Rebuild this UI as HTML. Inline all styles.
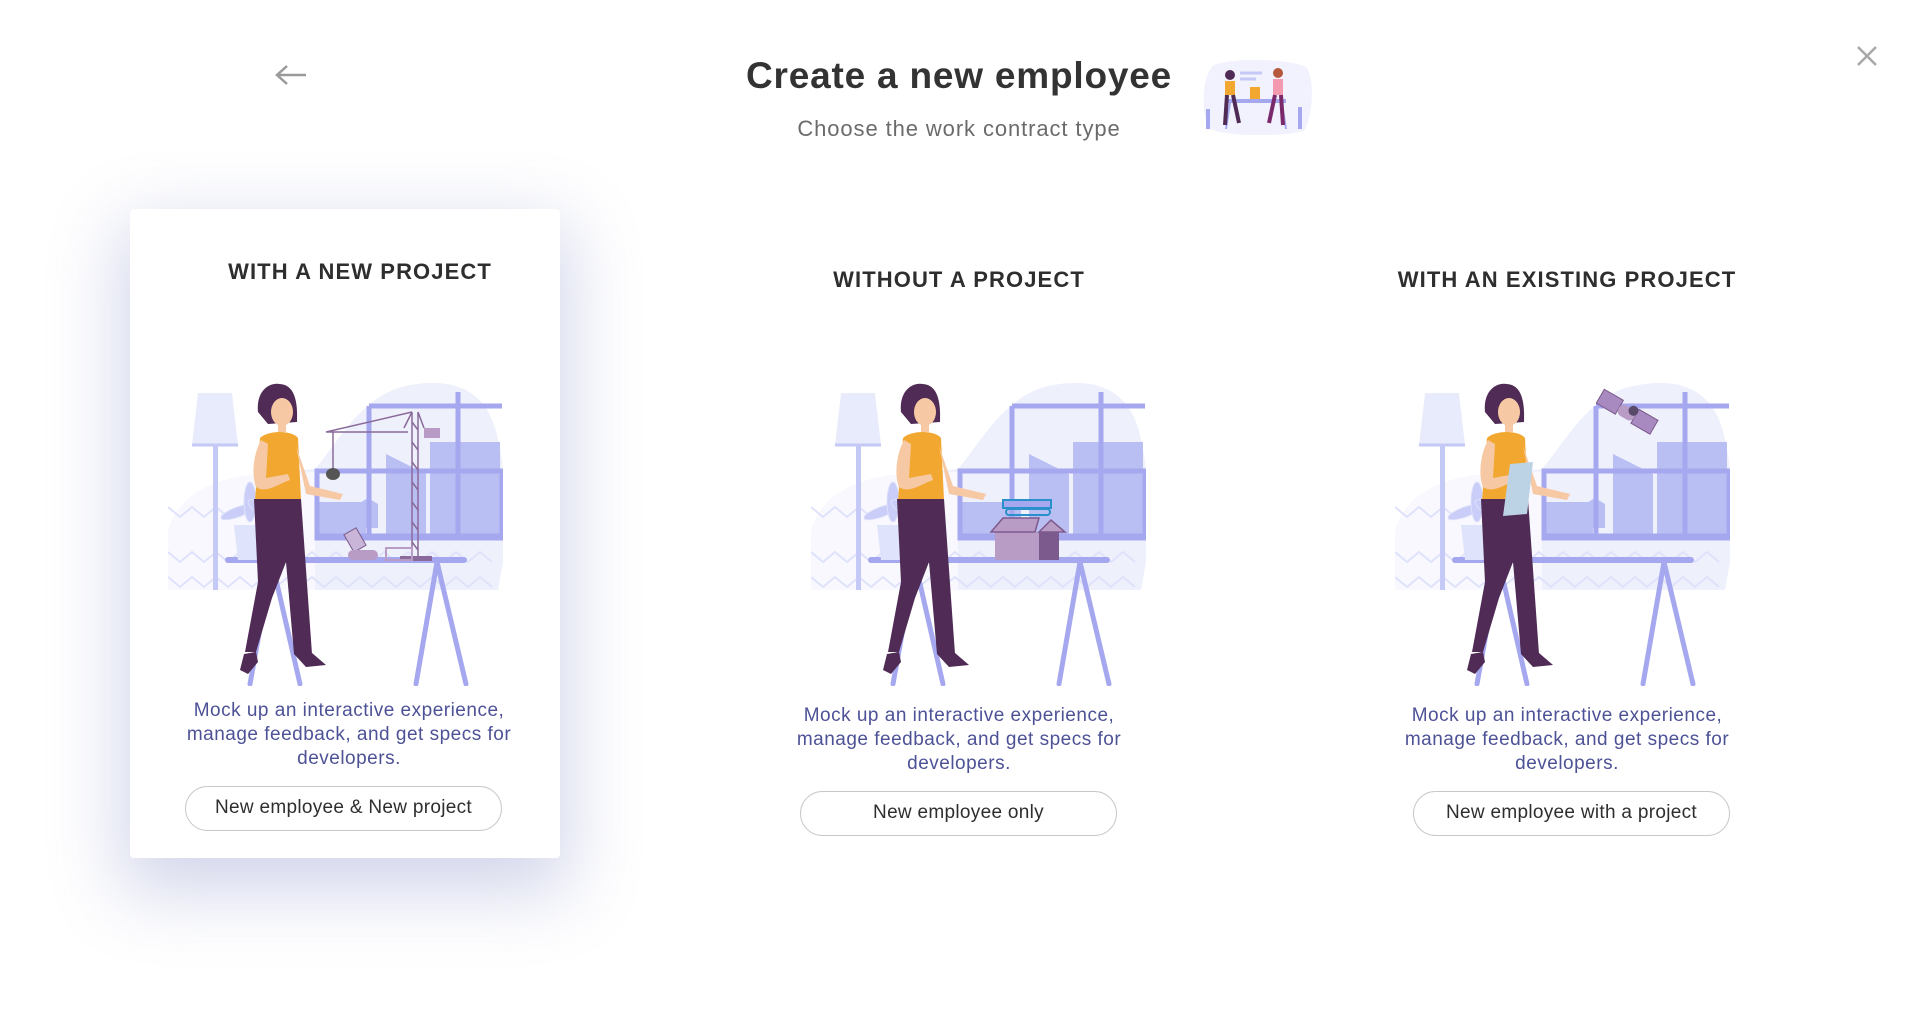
<!DOCTYPE html>
<html><head><meta charset="utf-8"><style>
html,body{margin:0;padding:0;background:#fff;width:1920px;height:1024px;overflow:hidden;font-family:"Liberation Sans",sans-serif;}
.abs{position:absolute}
h1{position:absolute;left:0;width:1918px;top:55px;margin:0;text-align:center;font-size:37px;font-weight:bold;color:#333;letter-spacing:0.8px}
.sub{position:absolute;left:0;width:1918px;top:116px;text-align:center;font-size:22px;color:#6b6b6b;letter-spacing:0.9px}
.card{position:absolute;left:130px;top:209px;width:430px;height:649px;background:#fff;border-radius:4px;box-shadow:0 25px 70px 10px rgba(110,120,190,.30)}
.head{position:absolute;font-size:22px;font-weight:bold;color:#2e2e2e;text-align:center;width:500px;letter-spacing:1.1px}
.desc{position:absolute;width:330px;text-align:center;font-size:19px;line-height:24px;color:#4d5296;letter-spacing:0.5px}
.btn{position:absolute;width:317px;height:45px;border:1.5px solid #c8c8cc;border-radius:24px;box-sizing:border-box;text-align:center;line-height:42px;font-size:19px;color:#2e2e2e;letter-spacing:0.3px}
svg.ill{position:absolute;width:335px;height:304px}
</style></head><body>
<svg class="abs" style="left:274px;top:64px" width="34" height="22" viewBox="0 0 34 22"><path d="M32 11H4M13 2L3 11l10 9" fill="none" stroke="#9a9a9a" stroke-width="2.5"/></svg>
<svg class="abs" style="left:1856px;top:45px" width="22" height="22" viewBox="0 0 22 22"><path d="M2 2L20 20M20 2L2 20" stroke="#a8a8a8" stroke-width="2.5"/></svg>
<h1>Create a new employee</h1>
<div class="sub">Choose the work contract type</div>
<svg class="abs" style="left:1200px;top:59px" width="114" height="76" viewBox="0 0 114 76">
<path d="M14 6C35 -2 90 0 106 8C116 20 112 60 104 72C80 78 30 78 10 70C0 55 2 15 14 6Z" fill="#f1f2fd"/>
<rect x="26" y="40" width="60" height="4" fill="#a5a8ef"/>
<path d="M30 44l-4 26M82 44l4 26" stroke="#a5a8ef" stroke-width="2"/>
<circle cx="30" cy="16" r="5" fill="#4f2b55"/><rect x="25" y="22" width="10" height="14" fill="#f2a830"/><path d="M27 36l-2 30M33 36l6 28" stroke="#4f2b55" stroke-width="4"/>
<circle cx="78" cy="14" r="5" fill="#b5583c"/><rect x="73" y="20" width="10" height="16" fill="#f39ab0"/><path d="M75 36l-6 28M81 36l2 30" stroke="#7a2a6a" stroke-width="4"/>
<rect x="50" y="28" width="10" height="12" fill="#f2a830"/>
<path d="M40 14h22M40 20h16" stroke="#c5c9f5" stroke-width="3"/>
<path d="M8 70V50M100 70V48" stroke="#a5a8ef" stroke-width="4"/>
</svg>

<div class="card"></div>

<!-- column 1 -->
<div class="head" style="left:110px;top:259px">WITH A NEW PROJECT</div>
<svg class="ill" style="left:168px;top:382px" viewBox="0 0 335 304">
<g id="base">
<path d="M0 208L0 150C10 110 50 96 90 92L147 87C170 60 190 20 230 6C270 -5 310 0 325 40C340 80 336 140 335 180L330 208Z" fill="#eef0fc"/>
<path d="M0 150C10 110 50 96 90 92L147 90V208H0Z" fill="#f8f8fe"/>
<path d="M0 170l12 10 12-10 12 10 12-10 12 10 12-10 12 10 12-10 12 10 12-10 12 10 12-10 12 10 12-10 12 10 12-10 12 10 12-10 12 10 12-10 12 10 12-10 12 10 12-10 12 10 12-10 12 10 M0 195l12 10 12-10 12 10 12-10 12 10 12-10 12 10 12-10 12 10 12-10 12 10 12-10 12 10 12-10 12 10 12-10 12 10 12-10 12 10 12-10 12 10 12-10 12 10 12-10 12 10 12-10 12 10 M0 125l12 10 12-10 12 10 12-10 12 10 12-10 12 10 12-10 12 10 12-10 12 10" fill="none" stroke="#dfe2fb" stroke-width="2"/>
<path d="M150 130h40v-8l10 -6 10 6v24h-60Z" fill="#b9bff3"/>
<rect x="150" y="120" width="48" height="34" fill="#b9bff3"/>
<path d="M218 72l40 20v62h-40Z" fill="#b9bff3"/>
<rect x="262" y="60" width="70" height="94" fill="#b9bff3"/>
<rect x="149" y="89" width="185" height="67" fill="none" stroke="#a5a8ef" stroke-width="5"/>
<path d="M201 24V156M290 10V156M201 24H334M149 154H334" stroke="#a5a8ef" stroke-width="5"/>
<path d="M30 11H64L70 63H24Z" fill="#e8ebfc"/><path d="M24 63H70" stroke="#c5c9f5" stroke-width="3"/>
<rect x="45" y="63" width="5" height="145" fill="#c5c9f5"/>
<path d="M60 178H296" stroke="#a5a8ef" stroke-width="6" stroke-linecap="round"/>
<path d="M104 180L82 302M104 180L132 302M269 180L248 302M269 180L298 302" stroke="#a5a8ef" stroke-width="5" stroke-linecap="round"/>
<path d="M66 143h34l-4 35h-26Z" fill="#dfe3fb"/>
<g fill="#c9cdf7" stroke="#dfe2fb" stroke-width="1"><ellipse cx="70" cy="130" rx="18" ry="5" transform="rotate(-20 70 130)"/><ellipse cx="82" cy="120" rx="6" ry="20"/><ellipse cx="96" cy="128" rx="18" ry="6" transform="rotate(30 96 128)"/><ellipse cx="102" cy="138" rx="14" ry="4"/></g>
</g>
<g id="woman">
<path d="M90 30C88 10 100 0 112 2C126 3 130 18 129 40L100 42Z" fill="#4f2b55"/>
<ellipse cx="114" cy="30" rx="11" ry="14" fill="#f6c9a4"/>
<rect x="110" y="38" width="8" height="12" fill="#f6c9a4"/>
<path d="M92 56C100 48 124 48 130 56L133 118H87Z" fill="#f2a830"/>
<path d="M93 58C84 75 84 95 88 105C98 112 110 102 122 98L120 92L98 96L100 62Z" fill="#f6c9a4"/>
<path d="M128 64L142 104L175 112L172 118L138 112Z" fill="#f6c9a4"/>
<path d="M86 117H133L144 272H126L118 180L104 216L88 270H77L90 200Z" fill="#4f2b55"/>
<path d="M76 272l12 -2 2 10-10 12-8-4Z" fill="#4f2b55"/><path d="M126 272l18-1 14 12-20 2Z" fill="#4f2b55"/>
</g>
<g stroke="#8a6a9a" stroke-width="1.5" fill="none"><path d="M158 50H240M244 30V178M250 30V178M244 30L236 46M250 30L256 46M158 50L244 30M256 50H270"/><path d="M244 40l6 8M244 60l6 8M244 80l6 8M244 100l6 8M244 120l6 8M244 140l6 8M244 160l6 8"/><path d="M165 50v38"/></g>
<rect x="256" y="46" width="16" height="10" fill="#b89cc6"/>
<rect x="232" y="174" width="32" height="5" fill="#8a6a9a"/>
<ellipse cx="165" cy="92" rx="7" ry="6" fill="#555"/>
<rect x="180" y="148" width="14" height="20" fill="#c9b5d8" stroke="#7a5a8a" transform="rotate(-30 187 158)"/>
<rect x="180" y="168" width="30" height="10" rx="5" fill="#b89cc6"/>
<rect x="218" y="166" width="26" height="12" fill="none" stroke="#b89cc6" stroke-width="2"/>
</svg>
<div class="desc" style="left:184px;top:699px">Mock up an interactive experience, manage feedback, and get specs for developers.</div>
<div class="btn" style="left:185px;top:786px">New employee &amp; New project</div>

<!-- column 2 -->
<div class="head" style="left:709px;top:267px">WITHOUT A PROJECT</div>
<svg class="ill" style="left:811px;top:382px" viewBox="0 0 335 304">
<use href="#base"/><use href="#woman"/>
<path d="M184 150H228V178H184Z" fill="#b89cc6"/><path d="M228 150H248V178H228Z" fill="#7d5a8d"/>
<path d="M180 150L192 136H228L224 150ZM228 150L240 138L254 150Z" fill="#b89cc6" stroke="#7d5a8d" stroke-width="1.5"/>
<rect x="192" y="118" width="48" height="8" fill="#a5a8ef" stroke="#2a90cc" stroke-width="2"/>
<rect x="195" y="127" width="44" height="6" rx="3" fill="none" stroke="#2a90cc" stroke-width="2"/>
</svg>
<div class="desc" style="left:794px;top:704px">Mock up an interactive experience, manage feedback, and get specs for developers.</div>
<div class="btn" style="left:800px;top:791px">New employee only</div>

<!-- column 3 -->
<div class="head" style="left:1317px;top:267px">WITH AN EXISTING PROJECT</div>
<svg class="ill" style="left:1395px;top:382px" viewBox="0 0 335 304">
<use href="#base"/><use href="#woman"/>
<path d="M115 82L138 80L132 132L108 134Z" fill="#bcd3e6"/>
<g transform="rotate(30 232 32)"><rect x="200" y="22" width="22" height="16" fill="#a98ac0" stroke="#7a5a8a"/><rect x="240" y="22" width="22" height="16" fill="#a98ac0" stroke="#7a5a8a"/><rect x="222" y="25" width="18" height="12" rx="5" fill="#b89cc6"/><circle cx="236" cy="26" r="5" fill="#5a4a6a"/></g>
</svg>
<div class="desc" style="left:1402px;top:704px">Mock up an interactive experience, manage feedback, and get specs for developers.</div>
<div class="btn" style="left:1413px;top:791px">New employee with a project</div>
</body></html>
